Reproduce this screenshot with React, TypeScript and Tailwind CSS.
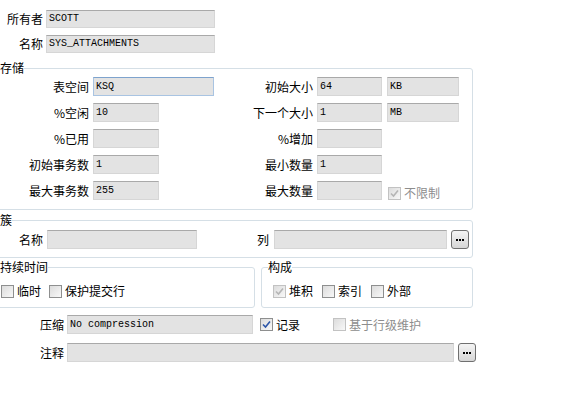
import React from 'react'

// ? small building blocks
const Input: React.FC<{ value?: string; className?: string; focus?: boolean }> = ({ value = '', className = '', focus }) => (
  <div
    className={`flex items-center h-[19px] pl-[2px] bg-[#e3e3e3] border font-['Liberation_Mono',monospace] text-[10px] leading-none text-black whitespace-nowrap overflow-hidden ${
      focus ? 'border-[#a9c4e2] border-t-[#7ea3cd]' : 'border-[#d6d6d6] border-t-[#a9a9a9]'
    } ${className}`}
  >
    {value}
  </div>
)

const Check: React.FC<{ checked?: boolean; disabled?: boolean; dim?: boolean; label: string }> = ({
  checked,
  disabled,
  dim,
  label,
}) => (
  <div className="flex items-center gap-[3px] whitespace-nowrap">
    <div
      className={`w-[13px] h-[13px] border flex items-center justify-center bg-gradient-to-br from-[#dcdcdc] to-[#f8f8f8] ${
        disabled ? 'border-[#c2c2c2]' : 'border-[#8e8f8f]'
      }`}
    >
      {checked && (
        <svg width="9" height="9" viewBox="0 0 9 9">
          <path
            d="M1 4.5 L3.5 7 L8 1.5"
            fill="none"
            stroke={disabled ? '#b5b5b5' : '#2c56a8'}
            strokeWidth="1.6"
          />
        </svg>
      )}
    </div>
    <span className={dim ? 'text-[#8d8d8d]' : 'text-black'}>{label}</span>
  </div>
)

const DotsButton: React.FC = () => (
  <div className="w-[18px] h-[19px] rounded-[3px] border border-[#707070] bg-gradient-to-b from-[#f4f4f4] to-[#d6d6d6] flex items-center justify-center">
    <svg width="8" height="2" viewBox="0 0 8 2">
      <rect x="0" y="0" width="2" height="2" fill="#000" />
      <rect x="3" y="0" width="2" height="2" fill="#000" />
      <rect x="6" y="0" width="2" height="2" fill="#000" />
    </svg>
  </div>
)

const storage = [
  { l: '表空间', v: 'KSQ', w: 'w-[121px]', focus: true, r: '初始大小', rv: '64', unit: 'KB' },
  { l: '%空闲', v: '10', w: 'w-[66px]', r: '下一个大小', rv: '1', unit: 'MB' },
  { l: '%已用', v: '', w: 'w-[66px]', r: '%增加', rv: '' },
  { l: '初始事务数', v: '1', w: 'w-[66px]', r: '最小数量', rv: '1' },
  { l: '最大事务数', v: '255', w: 'w-[66px]', r: '最大数量', rv: '', unlimited: true },
]

const App: React.FC = () => {
  return (
    <div className="w-[581px] h-[394px] overflow-hidden bg-white text-[12px] leading-[14px] text-black font-['Noto_Sans_CJK_SC',sans-serif]">
      {/* owner / name */}
      <div className="pt-[10px] flex flex-col gap-[7px]">
        <div className="flex items-center gap-[3px]">
          <span className="w-[43px] text-right">所有者</span>
          <Input value="SCOTT" className="w-[169px] !h-[18px]" />
        </div>
        <div className="flex items-center gap-[3px]">
          <span className="w-[43px] text-right">名称</span>
          <Input value="SYS_ATTACHMENTS" className="w-[169px] !h-[18px]" />
        </div>
      </div>

      {/* 存储 */}
      <fieldset className="mt-[8px] ml-[-4px] w-[477px] pl-[3px] pb-[9px] border border-[#d5dfe6] rounded-[3px]">
        <legend className="leading-[14px]">存储</legend>
        <div className="pt-[2px] flex flex-col gap-[7px]">
          {storage.map((row) => (
            <div key={row.l} className="flex h-[19px]">
              <div className="w-[230px] flex items-center gap-[4px]">
                <span className="w-[89px] text-right">{row.l}</span>
                <Input value={row.v} className={row.w} focus={row.focus} />
              </div>
              <div className="flex items-center">
                <span className="w-[83px] text-right">{row.r}</span>
                <Input value={row.rv} className="w-[65px] ml-[4px]" />
                {row.unit && <Input value={row.unit} className="w-[72px] ml-[5px]" />}
                {row.unlimited && (
                  <div className="ml-[6px] self-end">
                    <Check checked disabled dim label="不限制" />
                  </div>
                )}
              </div>
            </div>
          ))}
        </div>
      </fieldset>

      {/* 簇 */}
      <fieldset className="mt-[3px] ml-[-4px] w-[477px] pl-[3px] pb-[8px] border border-[#d5dfe6] rounded-[3px]">
        <legend className="leading-[14px]">簇</legend>
        <div className="pt-[3px] flex items-center h-[22px]">
          <span className="w-[43px] text-right">名称</span>
          <Input className="w-[150px] ml-[4px]" />
          <span className="ml-[60px]">列</span>
          <Input className="w-[173px] ml-[5px]" />
          <div className="ml-[4px]">
            <DotsButton />
          </div>
        </div>
      </fieldset>

      {/* 持续时间 / 构成 */}
      <div className="mt-[2px] flex">
        <fieldset className="ml-[-4px] w-[259px] pl-[3px] pb-[9px] border border-[#d5dfe6] rounded-[3px]">
          <legend className="leading-[14px]">持续时间</legend>
          <div className="pt-[10px] flex items-center gap-[8px] pl-[1px]">
            <Check label="临时" />
            <Check label="保护提交行" />
          </div>
        </fieldset>
        <fieldset className="ml-[6px] w-[212px] pl-[6px] pb-[9px] border border-[#d5dfe6] rounded-[3px]">
          <legend className="leading-[14px]">构成</legend>
          <div className="pt-[10px] flex items-center gap-[9px] pl-[5px]">
            <Check checked disabled label="堆积" />
            <Check label="索引" />
            <Check label="外部" />
          </div>
        </fieldset>
      </div>

      {/* 压缩 / 注释 */}
      <div className="mt-[7px] flex flex-col gap-[9px]">
        <div className="flex items-center h-[19px]">
          <span className="w-[64px] text-right">压缩</span>
          <Input value="No compression" className="w-[186px] ml-[3px]" />
          <div className="ml-[7px]">
            <Check checked label="记录" />
          </div>
          <div className="ml-[33px]">
            <Check disabled dim label="基于行级维护" />
          </div>
        </div>
        <div className="flex items-center h-[19px]">
          <span className="w-[64px] text-right">注释</span>
          <Input className="w-[387px] ml-[3px]" />
          <div className="ml-[4px]">
            <DotsButton />
          </div>
        </div>
      </div>
    </div>
  )
}

export default App
